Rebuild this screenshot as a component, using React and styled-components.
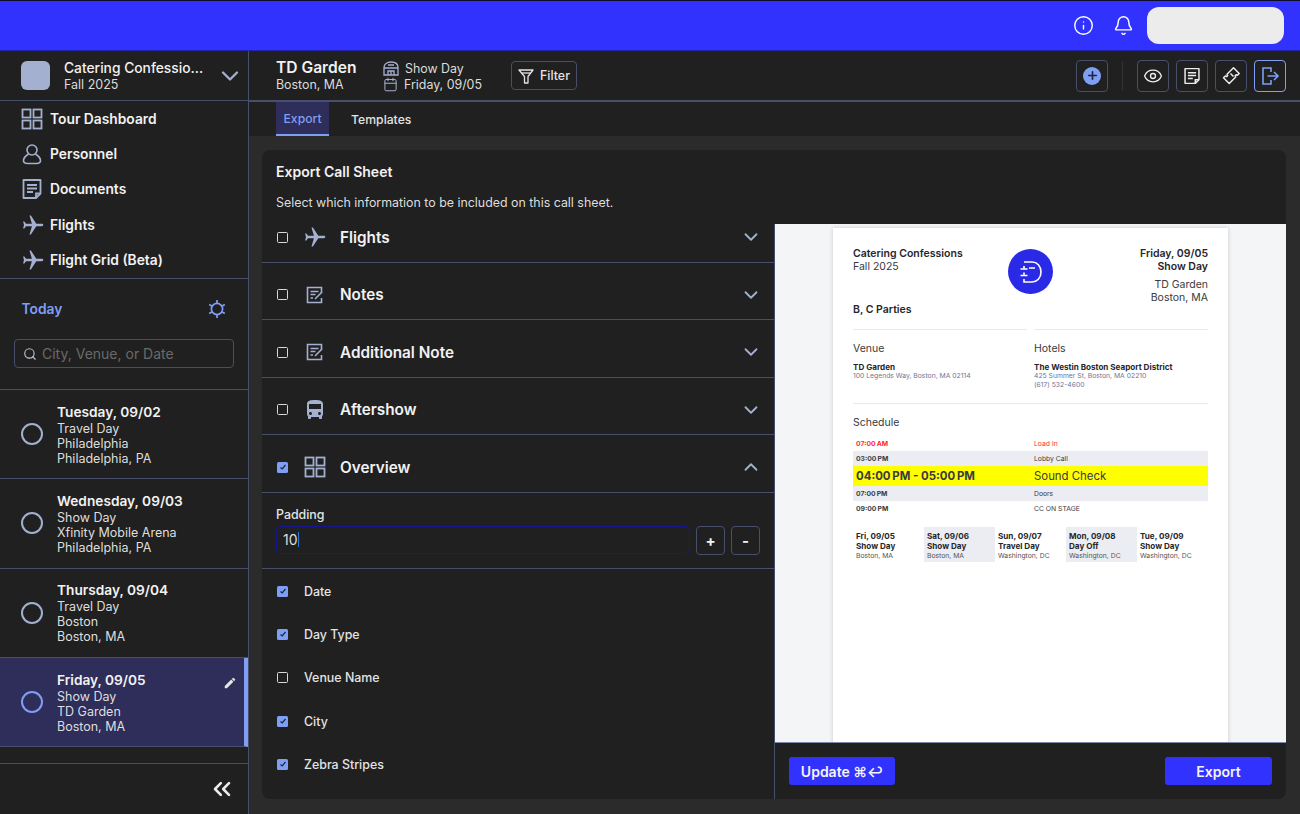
import React from 'react';
import styled, { createGlobalStyle } from 'styled-components';
import { Info, Bell, Eye, ChevronDown, ChevronUp, ChevronsLeft, Search, Calendar, Plus } from 'lucide-react';
import { MdEdit, MdDirectionsBus } from 'react-icons/md';

const GlobalStyle = createGlobalStyle`
  html, body { margin: 0; padding: 0; background: #2b2b2b; }
  * { box-sizing: border-box; }
  body { font-family: Inter, "Liberation Sans", sans-serif; color: #f2f2f2; -webkit-font-smoothing: antialiased; }
`;

const ICON = '#a3b0cf';
const ACCENT = '#7f9ff5';
const LINE = '#474f6b';

const GridIcon = ({ size = 22 }) => (
  <svg width={size} height={size} viewBox="0 0 22 22" fill="none" stroke={ICON} strokeWidth="1.8">
    <rect x="1.5" y="1.5" width="8" height="8" />
    <rect x="12.5" y="1.5" width="8" height="8" />
    <rect x="1.5" y="12.5" width="8" height="8" />
    <rect x="12.5" y="12.5" width="8" height="8" />
  </svg>
);
const PersonIcon = () => (
  <svg width="22" height="22" viewBox="0 0 22 22" fill="none" stroke={ICON} strokeWidth="1.6">
    <circle cx="11" cy="7" r="5" />
    <path d="M7.5 11C4.5 13 2.5 15 2.5 17.5C2.5 20 4.5 20.5 6.5 20.5H15.5C17.5 20.5 19.5 20 19.5 17.5C19.5 15 17.5 13 14.5 11" />
  </svg>
);
const DocIcon = ({ color = ICON, size = 22 }) => (
  <svg width={size} height={size} viewBox="0 0 22 22" fill="none" stroke={color} strokeWidth="1.8">
    <path d="M2.5 2h17v13.5l-4.5 4.5H2.5z" strokeLinejoin="round" />
    <path d="M6 7h10M6 10.5h10M6 14h6M15 20v-4.500h4.500" />
  </svg>
);
const PlaneIcon = ({ size = 24 }) => (
  <svg width={size} height={size} viewBox="0 0 24 24" fill={ICON}>
    <path transform="rotate(90 12 12)" d="M21.500 15.500v-1.400l-8.300-5.400V3.200c0-.8-.5-1.500-1.200-1.500s-1.200.7-1.200 1.500v5.500l-8.300 5.400v1.400l8.300-2.400V19l-2.200 1.600v1.300l3.400-.9 3.400.9v-1.300L13.200 19v-5.900z" />
  </svg>
);
const NoteIcon = () => (
  <svg width="18" height="18" viewBox="0 0 18 18" fill="none" stroke={ICON} strokeWidth="1.6">
    <path d="M15.500 7V1.500H1.500v15h14V12" />
    <path d="M4.500 5.500h8M4.500 8.500h5M4.500 12h2.500M9 13l7-7" />
  </svg>
);
const BusIcon = () => <MdDirectionsBus size={24} color={ICON} />;
const SunIcon = () => (
  <svg width="20" height="20" viewBox="0 0 20 20" fill="none" stroke={ACCENT} strokeWidth="1.7">
    <circle cx="10" cy="10" r="5.600" />
    <path d="M10 1v3M10 16v3M2.200 5.500l2.600 1.500M15.200 13l2.600 1.500M2.200 14.500L4.800 13M15.200 7l2.600-1.500" />
  </svg>
);
const VenueIcon = () => (
  <svg width="16" height="15" viewBox="0 0 16 15" fill="none" stroke={ICON} strokeWidth="1.3">
    <path d="M1 14V6.500C1 3 4 1 8 1s7 2 7 5.500V14z" />
    <path d="M1 7h14M5 4h6M5 14v-4h6v4M8 10v4" />
  </svg>
);
const FunnelIcon = () => (
  <svg width="16" height="16" viewBox="0 0 16 16" fill="none" stroke="#e4e4e4" strokeWidth="1.3">
    <path d="M1 2h14l-5 6.500V15H6.500V8.500z" strokeLinejoin="round" />
    <path d="M3.500 5h9" />
  </svg>
);
const TicketIcon = () => (
  <svg width="20" height="20" viewBox="0 0 20 20" fill="none" stroke="#ececec" strokeWidth="1.5">
    <path d="M12.500 1.800l5.700 5.700-1.800 1.800-1.300-.6-1 1 .6 1.300-6.500 6.500-5.700-5.700 1.800-1.800 1.300.6 1-1-.6-1.300z" strokeLinejoin="round" />
    <path d="M9.500 7.500l3 3" />
  </svg>
);
const ExitIcon = () => (
  <svg width="20" height="20" viewBox="0 0 20 20" fill="none" stroke={ACCENT} strokeWidth="1.6">
    <path d="M11 6V2H3v16h8v-4" />
    <path d="M7.500 10H18M14 6l4 4-4 4" />
  </svg>
);
const LogoMark = () => (
  <svg width="26" height="26" viewBox="0 0 26 26" fill="none" stroke="#fff" strokeWidth="1.600">
    <path d="M6 3h8c5 0 9 4 9 10s-4 10-9 10H6v-3" />
    <path d="M11 9h6M2.500 10h7M2.500 16.500h7M6 7v3M6 13.500v3" />
  </svg>
);

const NAV = [
  { label: 'Tour Dashboard', icon: <GridIcon /> },
  { label: 'Personnel', icon: <PersonIcon /> },
  { label: 'Documents', icon: <DocIcon /> },
  { label: 'Flights', icon: <PlaneIcon /> },
  { label: 'Flight Grid (Beta)', icon: <PlaneIcon /> },
];

const DAYS = [
  { date: 'Tuesday, 09/02', lines: ['Travel Day', 'Philadelphia', 'Philadelphia, PA'] },
  { date: 'Wednesday, 09/03', lines: ['Show Day', 'Xfinity Mobile Arena', 'Philadelphia, PA'] },
  { date: 'Thursday, 09/04', lines: ['Travel Day', 'Boston', 'Boston, MA'] },
  { date: 'Friday, 09/05', lines: ['Show Day', 'TD Garden', 'Boston, MA'], active: true },
];

const SECTIONS = [
  { label: 'Flights', icon: <PlaneIcon />, first: true },
  { label: 'Notes', icon: <NoteIcon /> },
  { label: 'Additional Note', icon: <NoteIcon /> },
  { label: 'Aftershow', icon: <BusIcon /> },
  { label: 'Overview', icon: <GridIcon />, on: true, open: true },
];

const OPTIONS = [
  { label: 'Date', on: true },
  { label: 'Day Type', on: true },
  { label: 'Venue Name', on: false },
  { label: 'City', on: true },
  { label: 'Zebra Stripes', on: true },
];

const SCHEDULE = [
  { time: '07:00\u2009AM', name: 'Load In', tone: 'red' },
  { time: '03:00\u2009PM', name: 'Lobby Call', tone: 'grey' },
  { time: '04:00\u2009PM - 05:00\u2009PM', name: 'Sound Check', tone: 'yellow' },
  { time: '07:00\u2009PM', name: 'Doors', tone: 'grey' },
  { time: '09:00\u2009PM', name: 'CC ON STAGE' },
];

const UPCOMING = [
  { date: 'Fri, 09/05', type: 'Show Day', city: 'Boston, MA' },
  { date: 'Sat, 09/06', type: 'Show Day', city: 'Boston, MA', shaded: true },
  { date: 'Sun, 09/07', type: 'Travel Day', city: 'Washington, DC' },
  { date: 'Mon, 09/08', type: 'Day Off', city: 'Washington, DC', shaded: true },
  { date: 'Tue, 09/09', type: 'Show Day', city: 'Washington, DC' },
];

function Check({ on }) {
  return (
    <CheckBox $on={on}>
      {on && (
        <svg width="8" height="8" viewBox="0 0 8 8" fill="none" stroke="#1d2440" strokeWidth="1.2">
          <path d="M1.500 4.500L3.200 6L6.500 2" />
        </svg>
      )}
    </CheckBox>
  );
}

export default function App() {
  return (
    <>
      <GlobalStyle />
      <Shell>
        <TopBar>
          <TopIcons>
            <Info size={21} color="#fff" strokeWidth={1.6} />
            <Bell size={21} color="#fff" strokeWidth={1.7} />
          </TopIcons>
          <UserPill />
        </TopBar>
        <Body>
          <Sidebar>
            <TourHeader>
              <TourAvatar />
              <TourText>
                <TourName>Catering Confessio...</TourName>
                <TourSeason>Fall 2025</TourSeason>
              </TourText>
              <ChevronDown size={28} color={ICON} strokeWidth={2} />
            </TourHeader>
            <NavList>
              {NAV.map((item) => (
                <NavItem key={item.label}>
                  <NavIcon>{item.icon}</NavIcon>
                  {item.label}
                </NavItem>
              ))}
            </NavList>
            <TodaySection>
              <TodayRow>
                <TodayLabel>Today</TodayLabel>
                <SunIcon />
              </TodayRow>
              <SearchBox>
                <Search size={14} color="#b9bfce" strokeWidth={2} />
                City, Venue, or Date
              </SearchBox>
            </TodaySection>
            <DayList>
              {DAYS.map((day) => (
                <DayItem key={day.date} $active={day.active}>
                  <Radio $active={day.active} />
                  <DayText>
                    <DayDate>{day.date}</DayDate>
                    {day.lines.map((line) => (
                      <DayLine key={line}>{line}</DayLine>
                    ))}
                  </DayText>
                  {day.active && (
                    <EditMark>
                      <MdEdit size={14} color="#e4e4e4" />
                    </EditMark>
                  )}
                </DayItem>
              ))}
            </DayList>
            <SideFooter>
              <ChevronsLeft size={28} color="#ececec" strokeWidth={2.2} />
            </SideFooter>
          </Sidebar>
          <Main>
            <MainHeader>
              <VenueBlock>
                <VenueName>TD Garden</VenueName>
                <VenueCity>Boston, MA</VenueCity>
              </VenueBlock>
              <MetaBlock>
                <MetaRow>
                  <VenueIcon />
                  Show Day
                </MetaRow>
                <MetaRow>
                  <Calendar size={15} color={ICON} strokeWidth={1.6} />
                  Friday, 09/05
                </MetaRow>
              </MetaBlock>
              <FilterButton>
                <FunnelIcon />
                Filter
              </FilterButton>
              <HeaderActions>
                <IconButton>
                  <PlusDot>
                    <Plus size={13} color="#1d2440" strokeWidth={3} />
                  </PlusDot>
                </IconButton>
                <ActionDivider />
                <IconButton>
                  <Eye size={20} color="#ececec" strokeWidth={1.6} />
                </IconButton>
                <IconButton>
                  <DocIcon color="#ececec" size={18} />
                </IconButton>
                <IconButton>
                  <TicketIcon />
                </IconButton>
                <IconButton $accent>
                  <ExitIcon />
                </IconButton>
              </HeaderActions>
            </MainHeader>
            <Tabs>
              <Tab $active>Export</Tab>
              <Tab>Templates</Tab>
            </Tabs>
            <Content>
              <Card>
                <CardHead>
                  <CardTitle>Export Call Sheet</CardTitle>
                  <CardSub>Select which information to be included on this call sheet.</CardSub>
                </CardHead>
                <CardBody>
                  <OptionsColumn>
                    {SECTIONS.map((s) => (
                      <SectionRow key={s.label} $first={s.first}>
                        <Check on={s.on} />
                        <SectionIcon>{s.icon}</SectionIcon>
                        <SectionLabel>{s.label}</SectionLabel>
                        {s.open ? (
                          <ChevronUp size={22} color={ICON} strokeWidth={2} />
                        ) : (
                          <ChevronDown size={22} color={ICON} strokeWidth={2} />
                        )}
                      </SectionRow>
                    ))}
                    <PaddingBlock>
                      <PaddingLabel>Padding</PaddingLabel>
                      <PaddingControls>
                        <PaddingInput>
                          10
                          <Caret />
                        </PaddingInput>
                        <StepButton>+</StepButton>
                        <StepButton>-</StepButton>
                      </PaddingControls>
                    </PaddingBlock>
                    <OptionList>
                      {OPTIONS.map((o) => (
                        <OptionRow key={o.label}>
                          <Check on={o.on} />
                          {o.label}
                        </OptionRow>
                      ))}
                    </OptionList>
                  </OptionsColumn>
                  <PreviewColumn>
                    <PreviewStage>
                      <Sheet>
                        <SheetTop>
                          <div>
                            <SheetStrong>Catering Confessions</SheetStrong>
                            <SheetPlain>Fall 2025</SheetPlain>
                          </div>
                          <Logo>
                            <LogoMark />
                          </Logo>
                          <SheetRight>
                            <SheetStrong>Friday, 09/05</SheetStrong>
                            <SheetStrong>Show Day</SheetStrong>
                            <SheetGap />
                            <SheetPlain>TD Garden</SheetPlain>
                            <SheetPlain>Boston, MA</SheetPlain>
                          </SheetRight>
                        </SheetTop>
                        <Parties>B, C Parties</Parties>
                        <SheetColumns>
                          <SheetColumn>
                            <SheetHeading>Venue</SheetHeading>
                            <PlaceName>TD Garden</PlaceName>
                            <PlaceDetail>100 Legends Way, Boston, MA 02114</PlaceDetail>
                          </SheetColumn>
                          <SheetColumn>
                            <SheetHeading>Hotels</SheetHeading>
                            <PlaceName>The Westin Boston Seaport District</PlaceName>
                            <PlaceDetail>425 Summer St, Boston, MA 02210</PlaceDetail>
                            <PlaceDetail>(617) 532-4600</PlaceDetail>
                          </SheetColumn>
                        </SheetColumns>
                        <ScheduleBlock>
                          <SheetHeading>Schedule</SheetHeading>
                          <ScheduleTable>
                            {SCHEDULE.map((row) => (
                              <ScheduleRow key={row.name} $tone={row.tone}>
                                <ScheduleTime>{row.time}</ScheduleTime>
                                <ScheduleName>{row.name}</ScheduleName>
                              </ScheduleRow>
                            ))}
                          </ScheduleTable>
                        </ScheduleBlock>
                        <Upcoming>
                          {UPCOMING.map((d) => (
                            <UpcomingDay key={d.date} $shaded={d.shaded}>
                              <UpcomingStrong>{d.date}</UpcomingStrong>
                              <UpcomingStrong>{d.type}</UpcomingStrong>
                              <UpcomingCity>{d.city}</UpcomingCity>
                            </UpcomingDay>
                          ))}
                        </Upcoming>
                      </Sheet>
                    </PreviewStage>
                    <PreviewFooter>
                      <PrimaryButton $wide={106}>Update ⌘↩</PrimaryButton>
                      <PrimaryButton $wide={107}>Export</PrimaryButton>
                    </PreviewFooter>
                  </PreviewColumn>
                </CardBody>
              </Card>
            </Content>
          </Main>
        </Body>
      </Shell>
    </>
  );
}

const Shell = styled.div`
  width: 1300px;
  height: 814px;
  overflow: hidden;
  display: flex;
  flex-direction: column;
  background: #2b2b2b;
`;

const TopBar = styled.header`
  height: 51px;
  flex: none;
  display: flex;
  align-items: center;
  justify-content: flex-end;
  gap: 13px;
  padding-right: 16px;
  background: #3232ff;
  border-top: 1px solid #0d0d2a;
  border-bottom: 1px solid #2323a8;
`;

const TopIcons = styled.div`
  display: flex;
  align-items: center;
  gap: 19px;
`;

const UserPill = styled.div`
  width: 137px;
  height: 37px;
  border-radius: 12px;
  background: #ececec;
`;

const Body = styled.div`
  flex: 1;
  min-height: 0;
  display: flex;
`;

const Sidebar = styled.aside`
  width: 249px;
  flex: none;
  display: flex;
  flex-direction: column;
  background: #202020;
  border-right: 1px solid ${LINE};
`;

const TourHeader = styled.div`
  height: 50px;
  flex: none;
  display: flex;
  align-items: center;
  padding: 0 4px 0 21px;
  border-bottom: 1px solid ${LINE};
`;

const TourAvatar = styled.div`
  width: 29px;
  height: 29px;
  border-radius: 6px;
  background: #a3b0cf;
`;

const TourText = styled.div`
  flex: 1;
  margin-left: 14px;
  padding-top: 1px;
`;

const TourName = styled.div`
  font-size: 13.800px;
  font-weight: 500;
  line-height: 17px;
`;

const TourSeason = styled.div`
  font-size: 12.500px;
  line-height: 16px;
  color: #dcdcdc;
`;

const NavList = styled.nav`
  height: 178px;
  flex: none;
  border-bottom: 1px solid ${LINE};
`;

const NavItem = styled.div`
  height: 35.300px;
  display: flex;
  align-items: center;
  padding-left: 21px;
  font-size: 13.800px;
  font-weight: 600;
`;

const NavIcon = styled.span`
  width: 29px;
  display: flex;
  align-items: center;
`;

const TodaySection = styled.div`
  height: 111px;
  flex: none;
  padding: 20px 21px 0 14px;
  border-bottom: 1px solid ${LINE};
`;

const TodayRow = styled.div`
  display: flex;
  align-items: center;
  justify-content: space-between;
  padding-left: 7.500px;
  height: 20px;
`;

const TodayLabel = styled.div`
  font-size: 13.800px;
  font-weight: 600;
  color: ${ACCENT};
`;

const SearchBox = styled.div`
  width: 220px;
  height: 29px;
  margin-top: 20px;
  display: flex;
  align-items: center;
  gap: 5px;
  padding-left: 8px;
  border: 1px solid ${LINE};
  border-radius: 4px;
  font-size: 14px;
  color: #6a6a6a;
`;

const DayList = styled.div`
  flex: 1;
  min-height: 0;
  border-bottom: 1px solid ${LINE};
`;

const DayItem = styled.div`
  position: relative;
  height: 89.300px;
  display: flex;
  align-items: center;
  padding-left: 21px;
  border-bottom: 1px solid ${LINE};
  background: ${(p) => (p.$active ? '#2f2d59' : 'transparent')};
  border-right: ${(p) => (p.$active ? `4px solid ${ACCENT}` : 'none')};
`;

const Radio = styled.div`
  width: 22px;
  height: 22px;
  flex: none;
  border-radius: 50%;
  border: 2px solid ${(p) => (p.$active ? ACCENT : ICON)};
`;

const DayText = styled.div`
  margin-left: 14px;
`;

const DayDate = styled.div`
  font-size: 13.700px;
  font-weight: 600;
  line-height: 18px;
`;

const DayLine = styled.div`
  font-size: 12.500px;
  line-height: 15px;
  color: #dedede;
`;

const EditMark = styled.span`
  position: absolute;
  top: 16px;
  right: 7px;
`;

const SideFooter = styled.div`
  height: 50px;
  flex: none;
  display: flex;
  align-items: center;
  justify-content: flex-end;
  padding-right: 12px;
`;

const Main = styled.main`
  flex: 1;
  min-width: 0;
  display: flex;
  flex-direction: column;
`;

const MainHeader = styled.div`
  height: 51px;
  flex: none;
  display: flex;
  align-items: center;
  padding: 0 14px 0 27px;
  background: #202020;
  border-bottom: 2px solid ${LINE};
`;

const VenueBlock = styled.div`
  width: 107px;
`;

const VenueName = styled.div`
  font-size: 15.600px;
  font-weight: 600;
  line-height: 18px;
`;

const VenueCity = styled.div`
  font-size: 12.400px;
  line-height: 16px;
  color: #dcdcdc;
`;

const MetaBlock = styled.div`
  width: 128px;
  padding-top: 2px;
`;

const MetaRow = styled.div`
  height: 15.500px;
  display: flex;
  align-items: center;
  gap: 6px;
  font-size: 12.400px;
  color: #dcdcdc;
`;

const FilterButton = styled.div`
  width: 66px;
  height: 29px;
  display: flex;
  align-items: center;
  justify-content: center;
  gap: 6px;
  border: 1px solid ${LINE};
  border-radius: 4px;
  font-size: 12.400px;
  font-weight: 500;
  color: #e4e4e4;
`;

const HeaderActions = styled.div`
  margin-left: auto;
  display: flex;
  align-items: center;
  gap: 7px;
`;

const IconButton = styled.div`
  width: 32px;
  height: 32px;
  display: flex;
  align-items: center;
  justify-content: center;
  border: 1px solid ${(p) => (p.$accent ? ACCENT : LINE)};
  border-radius: 4px;
`;

const PlusDot = styled.span`
  width: 18px;
  height: 18px;
  display: flex;
  align-items: center;
  justify-content: center;
  border-radius: 50%;
  background: ${ACCENT};
`;

const ActionDivider = styled.span`
  width: 1px;
  height: 30px;
  margin: 0 7px;
  background: #333;
`;

const Tabs = styled.div`
  height: 34px;
  flex: none;
  display: flex;
  gap: 22px;
  padding-left: 27px;
  background: #202020;
`;

const Tab = styled.div`
  padding: 0 ${(p) => (p.$active ? '7.500px' : '0')};
  display: flex;
  align-items: center;
  font-size: 12.200px;
  font-weight: 500;
  color: ${(p) => (p.$active ? ACCENT : '#e4e4e4')};
  background: ${(p) => (p.$active ? '#2f2d59' : 'transparent')};
  border-bottom: ${(p) => (p.$active ? `2px solid ${ACCENT}` : 'none')};
`;

const Content = styled.div`
  flex: 1;
  min-height: 0;
  padding: 14px 14px 15px 13px;
`;

const Card = styled.section`
  height: 100%;
  display: flex;
  flex-direction: column;
  border-radius: 8px;
  overflow: hidden;
  background: #202020;
`;

const CardHead = styled.div`
  height: 74px;
  flex: none;
  padding: 13px 14px 0;
`;

const CardTitle = styled.h2`
  margin: 0;
  font-size: 14px;
  font-weight: 600;
  line-height: 18px;
`;

const CardSub = styled.p`
  margin: 14px 0 0;
  font-size: 12.400px;
  line-height: 16px;
  color: #dedede;
`;

const CardBody = styled.div`
  flex: 1;
  min-height: 0;
  display: flex;
`;

const OptionsColumn = styled.div`
  width: 513px;
  flex: none;
  border-right: 1px solid ${LINE};
`;

const SectionRow = styled.div`
  height: ${(p) => (p.$first ? '38.500px' : '57.500px')};
  display: flex;
  align-items: center;
  padding: ${(p) => (p.$first ? '0 12px 11px 15px' : '8px 12px 0 15px')};
  border-bottom: 1px solid ${LINE};
`;

const CheckBox = styled.span`
  width: 11px;
  height: 11px;
  flex: none;
  display: flex;
  align-items: center;
  justify-content: center;
  border-radius: 1.500px;
  border: ${(p) => (p.$on ? 'none' : '1.300px solid #d8d8d8')};
  background: ${(p) => (p.$on ? ACCENT : 'transparent')};
`;

const SectionIcon = styled.span`
  width: 24px;
  margin-left: 15px;
  display: flex;
  align-items: center;
  justify-content: center;
`;

const SectionLabel = styled.span`
  flex: 1;
  margin-left: 13px;
  font-size: 15.300px;
  font-weight: 600;
`;

const PaddingBlock = styled.div`
  height: 76px;
  padding: 14px 14px 0;
  border-bottom: 1px solid ${LINE};
`;

const PaddingLabel = styled.div`
  font-size: 12.400px;
  font-weight: 500;
  line-height: 16px;
  color: #e4e4e4;
`;

const PaddingControls = styled.div`
  margin-top: 3px;
  display: flex;
  gap: 6px;
`;

const PaddingInput = styled.div`
  flex: 1;
  height: 28px;
  display: flex;
  align-items: center;
  padding-left: 6px;
  border: 1px solid #161690;
  border-radius: 4px;
  font-size: 14px;
  color: #dedede;
`;

const Caret = styled.span`
  width: 1px;
  height: 15px;
  background: #1e7be0;
`;

const StepButton = styled.div`
  width: 29px;
  height: 29px;
  display: flex;
  align-items: center;
  justify-content: center;
  border: 1px solid ${LINE};
  border-radius: 4px;
  font-size: 15px;
  font-weight: 700;
`;

const OptionList = styled.div`
  padding-top: 1px;
`;

const OptionRow = styled.div`
  height: 43.300px;
  display: flex;
  align-items: center;
  gap: 16px;
  padding-left: 15px;
  font-size: 12.400px;
  font-weight: 500;
  color: #e4e4e4;
`;

const PreviewColumn = styled.div`
  flex: 1;
  min-width: 0;
  display: flex;
  flex-direction: column;
`;

const PreviewStage = styled.div`
  height: 519px;
  flex: none;
  display: flex;
  justify-content: flex-start;
  padding: 4px 0 0 58px;
  overflow: hidden;
  background: #f4f5f7;
  border-bottom: 1px solid #7d8aa8;
`;

const Sheet = styled.div`
  width: 395px;
  height: 600px;
  flex: none;
  padding: 20px;
  background: #fff;
  color: #26262b;
  box-shadow: 0 0 4px rgba(40, 45, 70, 0.22);
`;

const SheetTop = styled.div`
  height: 55px;
  display: grid;
  grid-template-columns: 1fr 45px 1fr;
`;

const SheetStrong = styled.div`
  font-size: 10.500px;
  font-weight: 600;
  line-height: 12.500px;
`;

const SheetPlain = styled.div`
  font-size: 10.500px;
  line-height: 12.500px;
  color: #3a3a40;
`;

const Logo = styled.div`
  width: 45px;
  height: 45px;
  margin-top: 1px;
  display: flex;
  align-items: center;
  justify-content: center;
  border-radius: 50%;
  background: #2a2ae6;
`;

const SheetRight = styled.div`
  text-align: right;
`;

const SheetGap = styled.div`
  height: 6px;
`;

const Parties = styled.div`
  height: 26px;
  font-size: 10.500px;
  font-weight: 600;
  line-height: 13px;
`;

const SheetColumns = styled.div`
  display: grid;
  grid-template-columns: 174px 174px;
  justify-content: space-between;
  height: 75px;
  border-bottom: 1px solid #e9eaf0;
`;

const SheetColumn = styled.div`
  padding-top: 12px;
  border-top: 1px solid #e9eaf0;
`;

const SheetHeading = styled.div`
  font-size: 10.500px;
  line-height: 14px;
  color: #3a3a40;
`;

const PlaceName = styled.div`
  margin-top: 6px;
  font-size: 8.100px;
  font-weight: 700;
  line-height: 10px;
`;

const PlaceDetail = styled.div`
  font-size: 6.800px;
  line-height: 8.500px;
  color: #6d7796;
`;

const ScheduleBlock = styled.div`
  padding-top: 12px;
`;

const ScheduleTable = styled.div`
  margin-top: 6px;
`;

const ScheduleRow = styled.div`
  display: grid;
  grid-template-columns: 181px 1fr;
  align-items: center;
  height: ${(p) => (p.$tone === 'yellow' ? '20px' : '15px')};
  font-size: ${(p) => (p.$tone === 'yellow' ? '11.400px' : '6.800px')};
  color: ${(p) => (p.$tone === 'red' ? '#ff2a2a' : '#3a3a40')};
  background: ${(p) =>
    p.$tone === 'yellow' ? '#ffff00' : p.$tone === 'grey' ? '#ecedf2' : 'transparent'};
`;

const ScheduleTime = styled.div`
  padding-left: 3px;
  font-weight: 700;
`;

const ScheduleName = styled.div`
  font-weight: 400;
`;

const Upcoming = styled.div`
  margin-top: 11px;
  display: grid;
  grid-template-columns: repeat(5, 71px);
`;

const UpcomingDay = styled.div`
  height: 35px;
  padding: 4px 3px 0;
  background: ${(p) => (p.$shaded ? '#ecedf2' : 'transparent')};
`;

const UpcomingStrong = styled.div`
  font-size: 8.100px;
  font-weight: 700;
  line-height: 10px;
`;

const UpcomingCity = styled.div`
  font-size: 6.800px;
  line-height: 9px;
  color: #555;
`;

const PreviewFooter = styled.div`
  flex: 1;
  display: flex;
  align-items: center;
  justify-content: space-between;
  padding: 0 14px;
`;

const PrimaryButton = styled.div`
  width: ${(p) => p.$wide}px;
  height: 28px;
  display: flex;
  align-items: center;
  justify-content: center;
  border-radius: 3px;
  background: #3232ff;
  font-size: 14px;
  font-weight: 600;
  color: #f4f4f4;
`;
